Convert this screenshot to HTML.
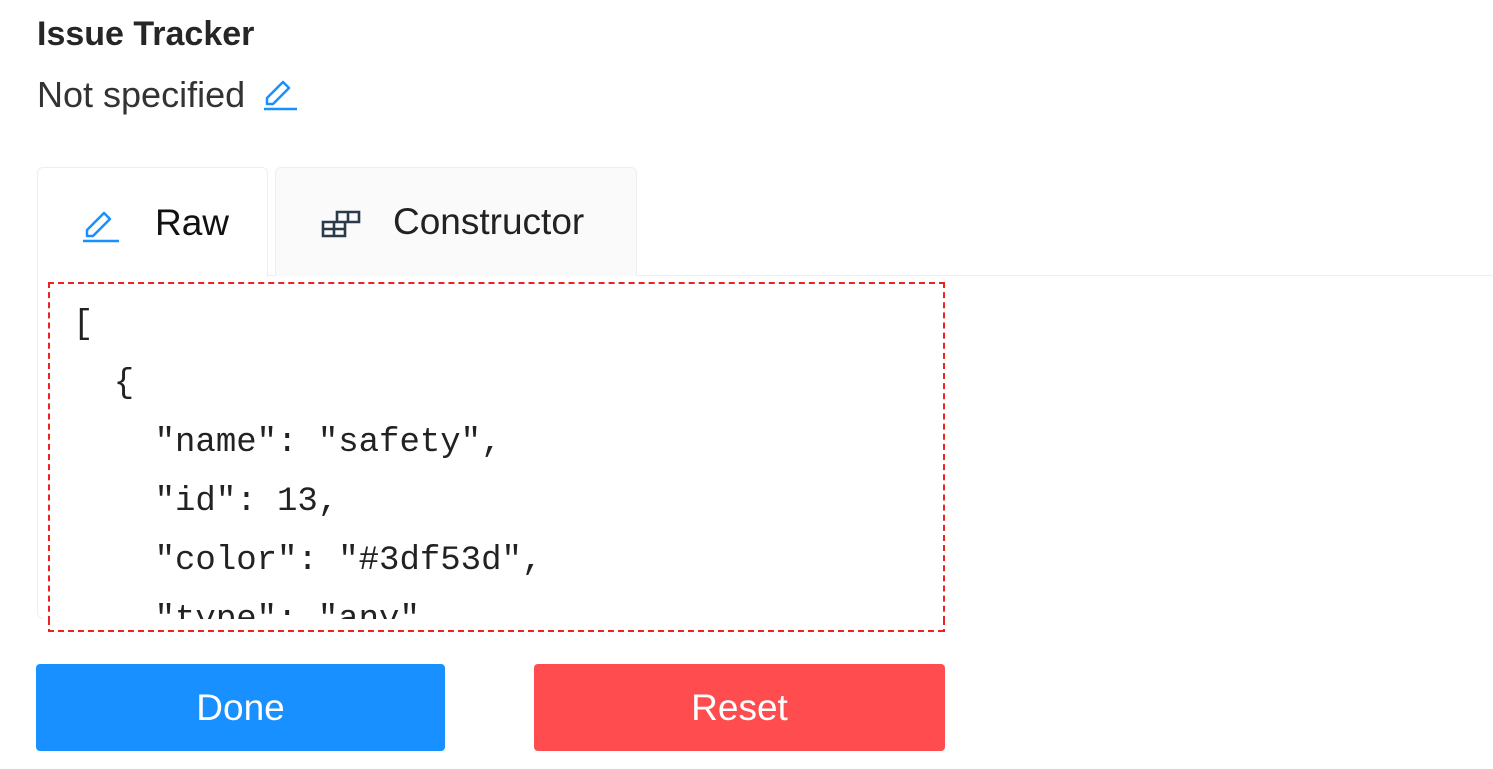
<!DOCTYPE html>
<html><head><meta charset="utf-8"><style>
body{margin:0;width:1493px;height:769px;background:#fff;font-family:"Liberation Sans",sans-serif;position:relative;overflow:hidden;color:#222}
.abs{position:absolute}
.title{left:37px;top:15px;font-size:34px;font-weight:bold;color:#262626}
.ns{left:37px;top:74px;font-size:36px;color:#333}
.tab{top:167px;height:109px;border:1px solid #eee;border-bottom:none;border-radius:6px 6px 0 0;box-sizing:border-box;font-size:37px;display:flex;align-items:center}
.panel{left:37px;top:275px;width:1470px;height:345px;border:1px solid #eee;border-radius:0 0 8px 8px;box-sizing:border-box}
.code{left:48px;top:282px;width:897px;height:350px;border:2px dashed #e22;box-sizing:border-box;overflow:hidden}
pre{margin:0;position:absolute;left:23px;top:12px;font-family:"Liberation Mono",monospace;font-size:34px;line-height:59px;color:#222}
.btn{top:664px;height:87px;border-radius:4px;color:#fff;font-size:37px;display:flex;align-items:center;justify-content:center}
</style></head><body>
<div class="abs title">Issue Tracker</div>
<div class="abs ns">Not specified <svg width="36" height="36" viewBox="0 0 36 36" style="vertical-align:-4px;margin-left:8px"><path d="M4 29 L4 23 L20 7 L26 13 L10 29 Z" fill="none" stroke="#1890ff" stroke-width="2.5" stroke-linejoin="round"/><path d="M1 34 H34" stroke="#1890ff" stroke-width="2.5"/></svg></div>
<div class="abs panel"></div>
<div class="abs tab" style="left:37px;width:231px;background:#fff;height:110px"><svg class="abs" style="left:44px;top:37px" width="38" height="38" viewBox="0 0 38 38"><path d="M5 31 L5 25 L22 8 L28 14 L11 31 Z" fill="none" stroke="#1890ff" stroke-width="2.5" stroke-linejoin="round"/><path d="M1 36 H37" stroke="#1890ff" stroke-width="2.5"/></svg><span class="abs" style="left:117px;color:#111">Raw</span></div>
<div class="abs tab" style="left:275px;width:362px;background:#fafafa"><svg class="abs" style="left:45px;top:42px" width="40" height="28" viewBox="0 0 40 28"><path d="M2 12 H24 V26 H2 Z M2 19 H24 M13 12 V26 M16 12 V2 H38 V12 H24 M27 2 V12" fill="none" stroke="#2b3a4a" stroke-width="2.6"/></svg><span class="abs" style="left:117px;color:#222">Constructor</span></div>
<div class="abs code"><pre>[
  {
    "name": "safety",
    "id": 13,
    "color": "#3df53d",
    "type": "any"</pre></div>
<div class="abs" style="left:38px;top:619px;width:1455px;height:13px;background:#fff;"></div>
<div class="abs" style="left:48px;top:619px;width:2px;height:13px;background:repeating-linear-gradient(#e22 0 6px,transparent 6px 10px)"></div>
<div class="abs" style="left:943px;top:619px;width:2px;height:13px;background:repeating-linear-gradient(#e22 0 6px,transparent 6px 10px)"></div>
<div class="abs" style="left:48px;top:630px;width:897px;height:2px;background:repeating-linear-gradient(90deg,#e22 0 6px,transparent 6px 10px)"></div>
<div class="abs btn" style="left:36px;width:409px;background:#1890ff">Done</div>
<div class="abs btn" style="left:534px;width:411px;background:#ff4d4f">Reset</div>
</body></html>
